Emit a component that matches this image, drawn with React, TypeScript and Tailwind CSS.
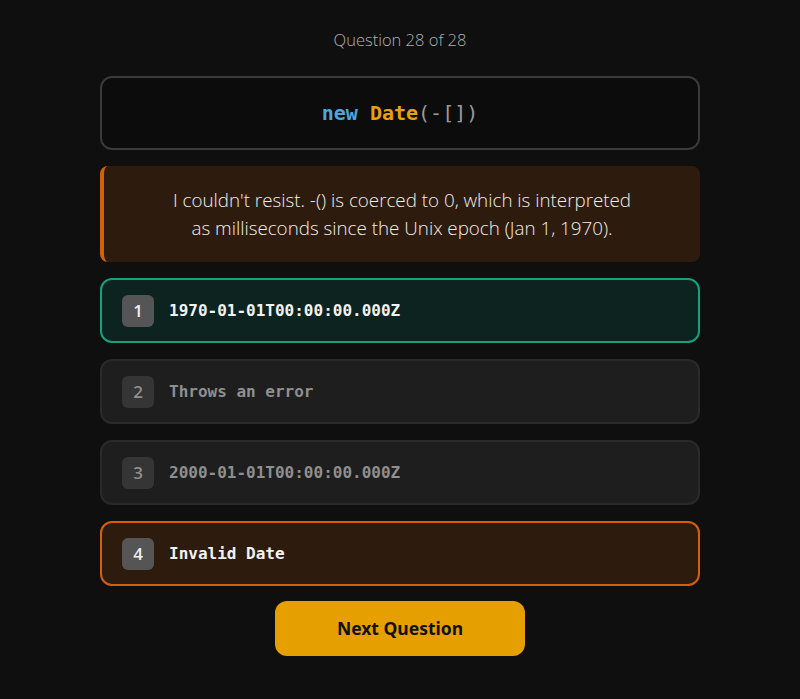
import React from 'react';

interface Option {
  id: number;
  text: string;
  state: 'correct' | 'wrong' | 'idle';
}

const options: Option[] = [
  { id: 1, text: '1970-01-01T00:00:00.000Z', state: 'correct' },
  { id: 2, text: 'Throws an error', state: 'idle' },
  { id: 3, text: '2000-01-01T00:00:00.000Z', state: 'idle' },
  { id: 4, text: 'Invalid Date', state: 'wrong' },
];

const sans = 'font-["Open_Sans","Noto_Sans",sans-serif]';
const mono = 'font-["DejaVu_Sans_Mono",monospace]';

const App: React.FC = () => {
  return (
    <div className={`min-h-screen bg-[#0f0f0f] flex flex-col items-center pt-7 ${sans}`}>
      <div className="text-[16.5px] leading-6 font-light text-[#b0b0b0] mb-6">Question 28 of 28</div>

      <div className="w-[600px] flex flex-col gap-4">
        {/* Code snippet */}
        <div className="border-2 border-[#3a3a3a] rounded-xl bg-[#0c0c0c] py-5 text-center">
          <code className={`${mono} text-[20px] leading-[30px] font-bold`}>
            <span className="text-[#4ea6dc]">new</span>{' '}
            <span className="text-[#e8a10e]">Date</span>
            <span className="text-[#9a9a9a] font-normal">(-[])</span>
          </code>
        </div>

        {/* Explanation */}
        <div className="border-l-4 border-[#d6600a] rounded-lg bg-[#2d1b0e] py-5 px-6 text-center text-[18.8px] leading-7 font-light text-[#f3eee9]">
          I couldn't resist. -() is coerced to 0, which is interpreted
          <br />
          as milliseconds since the Unix epoch (Jan 1, 1970).
        </div>

        {/* Answer options */}
        {options.map((opt) => {
          const box =
            opt.state === 'correct'
              ? 'border-[#13a27b] bg-[#0d231f]'
              : opt.state === 'wrong'
              ? 'border-[#d6600a] bg-[#2d1b0e]'
              : 'border-[#2a2a2a] bg-[#1e1e1e]';
          const active = opt.state !== 'idle';
          return (
            <div
              key={opt.id}
              className={`h-[65px] border-2 rounded-xl flex items-center px-5 gap-[15px] ${box}`}
            >
              <div
                className={`w-8 h-8 rounded-md flex items-center justify-center text-[17px] font-semibold ${
                  active ? 'bg-[#555555] text-[#f0f0f0]' : 'bg-[#353535] text-[#8f8f8f]'
                }`}
              >
                {opt.id}
              </div>
              <span
                className={`${mono} text-[16px] font-bold ${
                  active ? 'text-[#f2f2f2]' : 'text-[#8f8f8f]'
                }`}
              >
                {opt.text}
              </span>
            </div>
          );
        })}

        <div className="flex justify-center -mt-px">
          <button className='w-[250px] h-[55px] rounded-xl bg-[#e5a000] text-[#111111] text-[17.5px] font-bold font-["Noto_Sans",sans-serif]'>
            Next Question
          </button>
        </div>
      </div>
    </div>
  );
};

export default App;
